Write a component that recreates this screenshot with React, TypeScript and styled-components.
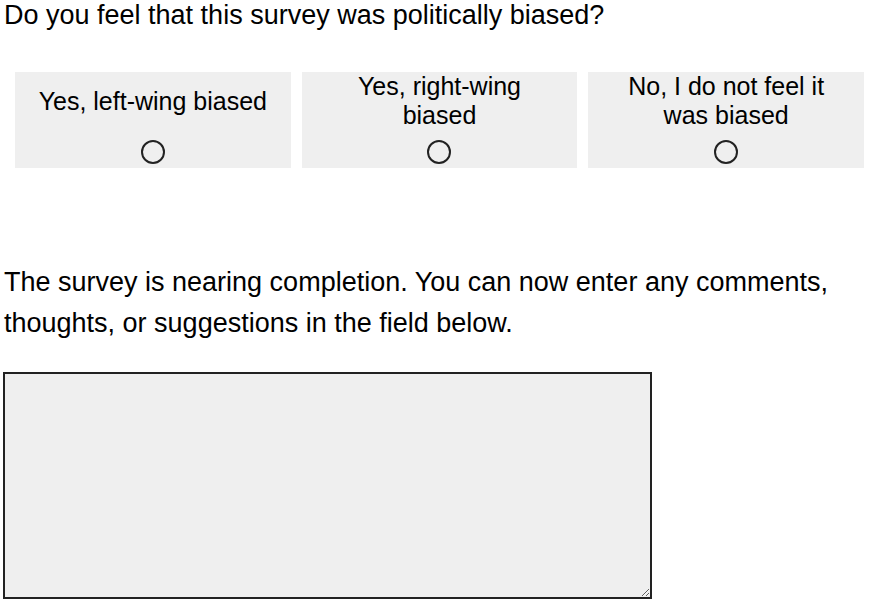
import styled, { createGlobalStyle } from "styled-components";

const GlobalStyle = createGlobalStyle`
  body {
    margin: 0;
    background: #ffffff;
    font-family: Arial, "Liberation Sans", sans-serif;
    color: #000000;
  }
`;

const Page = styled.div`
  padding: 0 2px 0 3px;
`;

const Question = styled.h2`
  margin: 0;
  padding-left: 1px;
  font-size: 27px;
  font-weight: normal;
  line-height: 30px;
`;

const Options = styled.div`
  display: grid;
  grid-template-columns: repeat(3, 1fr);
  gap: 11px;
  padding: 42px 11px 0 12px;
`;

const Option = styled.label`
  display: flex;
  flex-direction: column;
  align-items: center;
  height: 96px;
  background-color: #efefef;
  cursor: pointer;
`;

const OptionText = styled.span`
  display: flex;
  align-items: center;
  justify-content: center;
  height: 58px;
  padding: 0 20px;
  text-align: center;
  font-size: 25px;
  line-height: 29px;
`;

const Radio = styled.input`
  appearance: none;
  margin: 10px 0 0;
  width: 24px;
  height: 24px;
  border: 2px solid #222222;
  border-radius: 50%;
  background: transparent;
  &:checked {
    background: radial-gradient(circle, #222222 0 5px, transparent 6px);
  }
`;

const Notice = styled.p`
  margin: 94px 0 0;
  padding-left: 1px;
  font-size: 27px;
  line-height: 41px;
`;

const Comments = styled.textarea`
  display: block;
  box-sizing: border-box;
  margin-top: 28px;
  width: 649px;
  height: 227px;
  border: 2px solid #222222;
  border-radius: 0;
  background-color: #efefef;
  font-family: inherit;
  font-size: 18px;
`;

const options = [
  "Yes, left-wing biased",
  "Yes, right-wing biased",
  "No, I do not feel it was biased",
];

function App() {
  return (
    <Page>
      <GlobalStyle />
      <Question>Do you feel that this survey was politically biased?</Question>
      <Options>
        {options.map((text) => (
          <Option key={text}>
            <OptionText>{text}</OptionText>
            <Radio type="radio" name="bias" />
          </Option>
        ))}
      </Options>
      <Notice>
        The survey is nearing completion. You can now enter any comments,
        thoughts, or suggestions in the field below.
      </Notice>
      <Comments />
    </Page>
  );
}

export default App;
